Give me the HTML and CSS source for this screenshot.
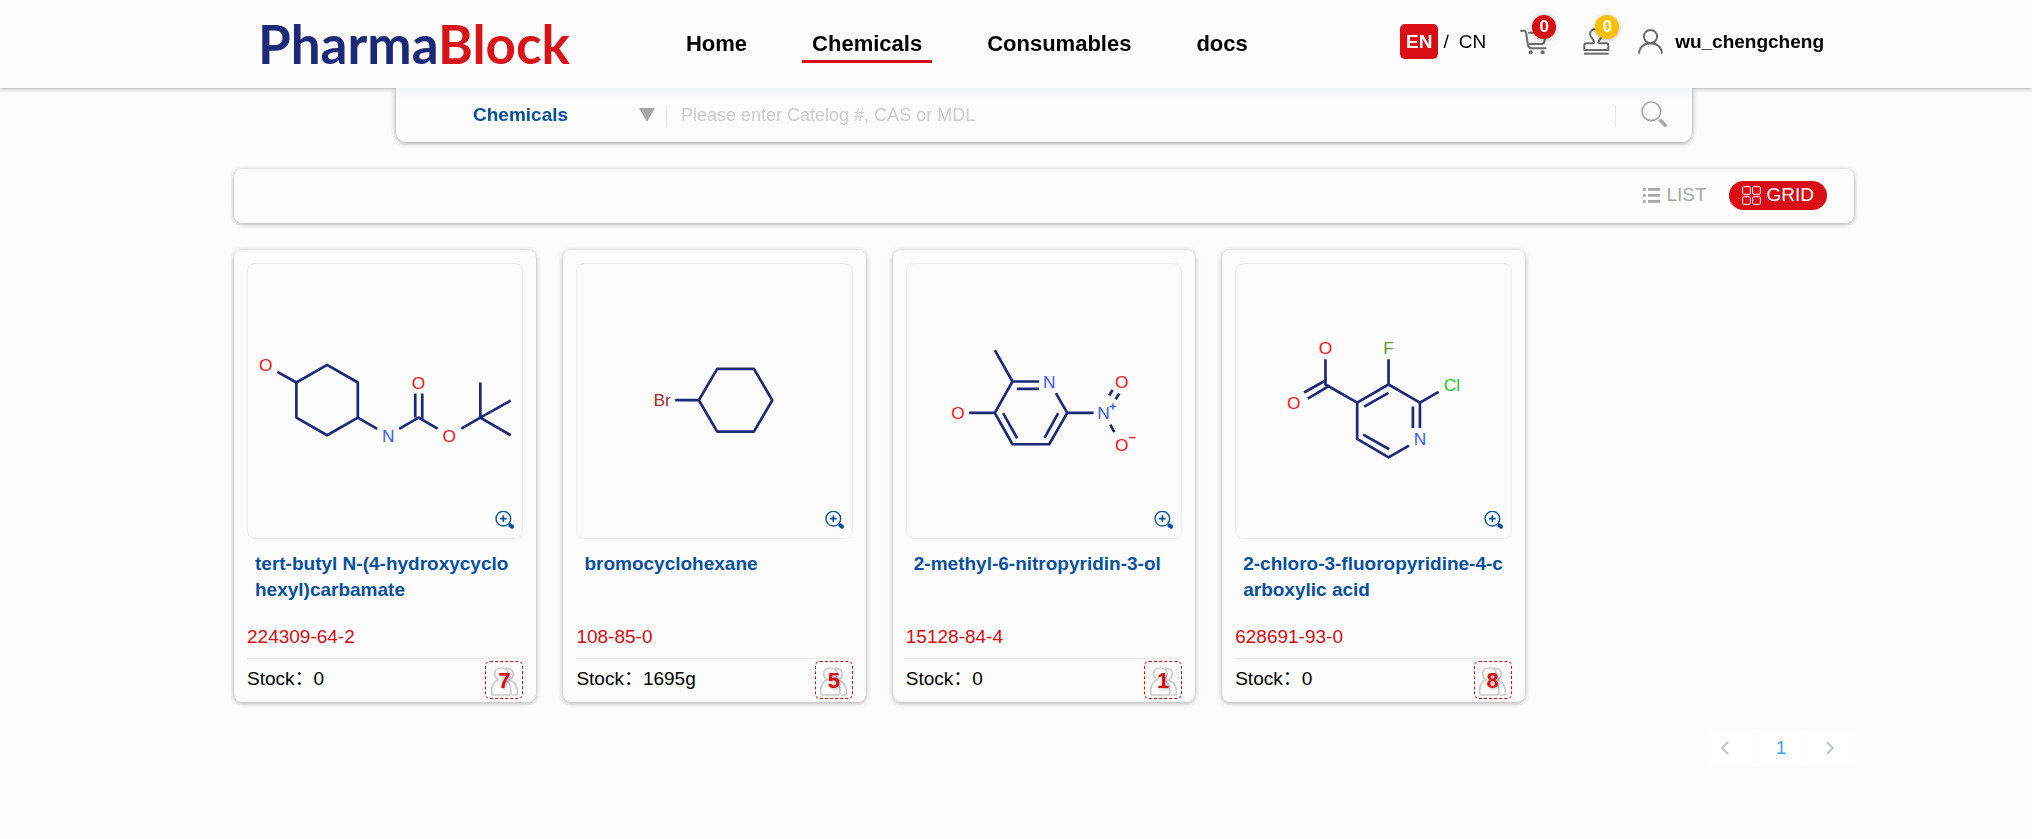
FILE: index.html
```html
<!DOCTYPE html>
<html lang="en">
<head>
<meta charset="utf-8">
<title>PharmaBlock</title>
<link rel="stylesheet" href="styles.css">
</head>
<body>
<svg class="sprite" aria-hidden="true">
  <symbol id="zoom-in" viewBox="0 0 57 54">
    <circle cx="25" cy="23" r="22" fill="none" stroke="currentColor" stroke-width="4"/>
    <path d="M25 13v20M15 23h20" stroke="currentColor" stroke-width="5"/>
    <path d="M46 43l5 4" stroke="currentColor" stroke-width="12" stroke-linecap="round"/>
  </symbol>
  <symbol id="people" viewBox="0 0 80 86">
    <g fill="none" stroke="#cacaca" stroke-width="5" stroke-linejoin="round" stroke-linecap="round">
      <path d="M22 38C15 34 11 28 11 20C11 9 20 3 31 3C42 3 51 10 51 20C51 28 47 34 40 38C52 42 58 53 59 68V77C59 82 57 83 53 83H8C4 83 2 81 2 77V68C3 53 10 42 22 38Z"/>
      <path d="M46 4C58 3 66 10 66 20C66 29 62 35 54 39C68 43 77 54 78 69V78C78 82 76 83 73 83H65"/>
    </g>
  </symbol>
</svg>

<header class="header">
  <div class="header-row">
    <a class="logo" href="#">Pharma<span class="logo-accent">Block</span></a>
    <nav class="nav">
      <a class="nav-link" href="#">Home</a>
      <a class="nav-link active" href="#">Chemicals</a>
      <a class="nav-link" href="#">Consumables</a>
      <a class="nav-link" href="#">docs</a>
    </nav>
    <div class="tools">
      <div class="lang">
        <button class="lang-btn current" type="button">EN</button>
        <span class="slash">/</span>
        <button class="lang-btn" type="button">CN</button>
      </div>
      <a class="tool" href="#" aria-label="Cart">
        <svg class="tool-icon" viewBox="0 0 81 81">
          <g fill="none" stroke="#6b6b6b" stroke-width="6" stroke-linecap="round" stroke-linejoin="round">
            <path d="M3 8H12Q17 8 18 13L24 52Q26 61 34 61H77"/>
            <path d="M27 14H78L73 41Q72 48 65 48H29"/>
          </g>
          <circle cx="32" cy="73" r="6" fill="#6b6b6b"/><circle cx="68" cy="73" r="6" fill="#6b6b6b"/>
        </svg>
        <span class="badge">0</span>
      </a>
      <a class="tool" href="#" aria-label="Orders">
        <svg class="tool-icon" viewBox="0 0 81 81">
          <g fill="none" stroke="#6b6b6b" stroke-width="6" stroke-linejoin="round">
            <path d="M34 46C34 33 21 30 21 18C21 9 29 3 40 3C51 3 59 9 59 18C59 30 46 33 46 46"/>
            <path d="M34 46H10Q4 46 4 53V66H76V53Q76 46 70 46H46"/>
            <path d="M3 77H77"/>
          </g>
        </svg>
        <span class="badge amber">0</span>
      </a>
      <a class="user" href="#">
        <svg class="user-icon" viewBox="0 0 76 76">
          <g fill="none" stroke="#6b6b6b" stroke-width="6">
            <circle cx="38" cy="23" r="20"/>
            <path d="M3 75C4 56 18 43 38 43C58 43 72 56 73 75"/>
          </g>
        </svg>
        <span>wu_chengcheng</span>
      </a>
    </div>
  </div>
</header>

<main class="main">
  <form class="search" role="search">
    <label class="picker">
      <select class="picker-select" aria-label="Category"><option>Chemicals</option></select>
      <svg class="picker-arrow" viewBox="0 0 16 14"><path d="M0 0H16L8 14Z" fill="#a6a6a6"/></svg>
    </label>
    <input class="search-input" type="text" aria-label="Search" placeholder="Please enter Catelog #, CAS or MDL">
    <button class="search-btn" type="button" aria-label="Search">
      <svg viewBox="0 0 81 81"><circle cx="31" cy="31" r="28" fill="none" stroke="#a6a6a6" stroke-width="5"/><path d="M56 56L76 76" stroke="#a6a6a6" stroke-width="10"/></svg>
    </button>
  </form>

  <div class="toolbar">
    <button class="view" type="button">
      <svg class="view-list" viewBox="0 0 51 45"><path d="M0 4H8M15 4H51M0 22H8M15 22H51M0 40H8M15 40H51" stroke="#a6a6a6" stroke-width="8"/></svg>
      <span>LIST</span>
    </button>
    <button class="view selected" type="button">
      <svg class="view-grid" viewBox="0 0 57 57"><g fill="none" stroke="#fff" stroke-width="3"><rect x="2" y="2" width="23" height="23" rx="3"/><rect x="32" y="2" width="23" height="23" rx="3"/><rect x="2" y="32" width="23" height="23" rx="3"/><rect x="32" y="32" width="23" height="23" rx="3"/></g></svg>
      <span>GRID</span>
    </button>
  </div>

  <section class="grid">
    <article class="card">
      <div class="figure">
        <svg class="molecule" viewBox="69 75 822 822">
          <path class="bond" d="M157 398L214 430L306 377L398 430V535L306 588L214 535V430M398 535L456 569M522 569L580 535L637 568M570 535V463M591 540V463M708 568L765 535V430M765 535L856 484M765 535L856 588"/>
          <g class="o"><text x="122" y="396">O</text><text x="580" y="449">O</text><text x="672" y="607">O</text></g>
          <text class="n" x="489" y="607">N</text>
        </svg>
        <button class="zoom" type="button" aria-label="Enlarge"><svg><use href="#zoom-in"/></svg></button>
      </div>
      <h2 class="title"><a href="#">tert-butyl N-(4-hydroxycyclohexyl)carbamate</a></h2>
      <p class="cas">224309-64-2</p>
      <div class="stock"><span>Stock：0</span><button class="count" type="button"><svg><use href="#people"/></svg><span class="count-num">7</span></button></div>
    </article>

    <article class="card">
      <div class="figure">
        <svg class="molecule" viewBox="69 75 822 822">
          <path class="bond" d="M363 483H434L489 389H599L654 483L599 577H489L434 483"/>
          <text class="br" x="324" y="501">Br</text>
        </svg>
        <button class="zoom" type="button" aria-label="Enlarge"><svg><use href="#zoom-in"/></svg></button>
      </div>
      <h2 class="title"><a href="#">bromocyclohexane</a></h2>
      <p class="cas">108-85-0</p>
      <div class="stock"><span>Stock：1695g</span><button class="count" type="button"><svg><use href="#people"/></svg><span class="count-num">5</span></button></div>
    </article>

    <article class="card">
      <div class="figure">
        <svg class="molecule" viewBox="67 75 822 822">
          <path class="bond" d="M330 333L383 427H463M396 449H462M383 427L330 521L383 615H493L547 521L513 462M253 521H330M355 522L397 597M520 522L479 596M547 521H626M676 556L688 579M673 469L683 452M692 480L703 463"/>
          <g class="o"><text x="220" y="540">O</text><text x="710" y="446">O</text><text x="710" y="634">O</text></g>
          <g class="n"><text x="493" y="446">N</text><text x="656" y="540">N</text></g>
          <path d="M674 502H693M684 492V512" stroke="#3b5bf5" stroke-width="4"/>
          <path d="M732 595H752" stroke="#ff1414" stroke-width="4"/>
        </svg>
        <button class="zoom" type="button" aria-label="Enlarge"><svg><use href="#zoom-in"/></svg></button>
      </div>
      <h2 class="title"><a href="#">2-methyl-6-nitropyridin-3-ol</a></h2>
      <p class="cas">15128-84-4</p>
      <div class="stock"><span>Stock：0</span><button class="count" type="button"><svg><use href="#people"/></svg><span class="count-num">1</span></button></div>
    </article>

    <article class="card">
      <div class="figure">
        <svg class="molecule" viewBox="64 75 822 822">
          <path class="bond" d="M332 360V436L427 490L521 436V360M521 436L615 490L671 458M615 490V566M594 502V566M427 490V599L521 654L582 619M448 502L521 461M445 586L523 630M332 424L268 460M342 441L279 478"/>
          <g class="o"><text x="332" y="345">O</text><text x="237" y="509">O</text></g>
          <text class="n" x="615" y="618">N</text>
          <text class="f" x="521" y="345">F</text>
          <text class="cl" x="711" y="455">Cl</text>
        </svg>
        <button class="zoom" type="button" aria-label="Enlarge"><svg><use href="#zoom-in"/></svg></button>
      </div>
      <h2 class="title"><a href="#">2-chloro-3-fluoropyridine-4-carboxylic acid</a></h2>
      <p class="cas">628691-93-0</p>
      <div class="stock"><span>Stock：0</span><button class="count" type="button"><svg><use href="#people"/></svg><span class="count-num">8</span></button></div>
    </article>
  </section>

  <nav class="pager" aria-label="Pages">
    <button class="page prev" type="button" aria-label="Previous page"><svg viewBox="0 0 9 14"><path d="M8 1L2 7L8 13" fill="none" stroke="#c0c4cc" stroke-width="2"/></svg></button>
    <button class="page num" type="button">1</button>
    <button class="page next" type="button" aria-label="Next page"><svg viewBox="0 0 9 14"><path d="M1 1L7 7L1 13" fill="none" stroke="#c0c4cc" stroke-width="2"/></svg></button>
  </nav>
</main>
</body>
</html>
```
FILE: styles.css
```css
* { box-sizing: border-box; }
body {
  margin: 0;
  padding-top: 88px;
  background: #fcfcfc;
  color: #000;
  font: 19px/26px "Liberation Sans", Arial, "Noto Sans CJK SC", sans-serif;
}
a { color: inherit; text-decoration: none; }
button, input, select {
  margin: 0;
  padding: 0;
  border: 0;
  background: none;
  color: inherit;
  font: inherit;
}
button { cursor: pointer; }
svg { display: block; }
.sprite { position: absolute; width: 0; height: 0; }

.main, .header-row { max-width: 1676px; margin: 0 auto; padding-left: 56px; }

.header {
  position: fixed;
  top: 0;
  left: 0;
  right: 0;
  background: #fcfcfc;
  box-shadow: 0 1px 4px rgba(0, 0, 0, 0.3);
}
.header-row {
  display: flex;
  align-items: center;
  height: 88px;
  padding-right: 30px;
  padding-left: 80px;
}
.logo {
  color: #1c2878;
  font: bold 53px/60px Lato, sans-serif;
}
.logo-accent { color: #d91418; }
.nav { display: flex; gap: 45px; margin-left: 106px; }
.nav-link {
  padding: 4px 10px 2px;
  border-bottom: 3px solid transparent;
  font-size: 22px;
  font-weight: bold;
  line-height: 28px;
}
.nav-link.active { border-color: #d90d13; }
.tools { display: flex; align-items: center; margin-left: auto; padding-bottom: 5px; }
.lang { display: flex; align-items: center; margin-right: 34px; }
.lang-btn.current {
  height: 35px;
  padding: 0 6px;
  border-radius: 5px;
  background: #d90d13;
  color: #fff;
  font-weight: bold;
}
.slash { margin: 0 10px 0 5px; }
.tool { position: relative; margin-right: 36px; }
.tool + .user { margin-left: -8px; }
.tool-icon { width: 27px; height: 27px; }
.badge {
  position: absolute;
  top: -13px;
  right: -9px;
  width: 24px;
  height: 24px;
  border-radius: 50%;
  background: #d90d13;
  box-shadow: 0 1px 4px rgba(0, 0, 0, 0.3);
  color: #fff;
  font-size: 17px;
  font-weight: bold;
  line-height: 24px;
  text-align: center;
}
.badge.amber { background: #ffc000; }
.user { display: flex; align-items: center; gap: 12px; font-weight: bold; }
.user-icon { width: 25px; height: 25px; }

.search {
  position: relative;
  display: flex;
  align-items: center;
  width: 80%;
  height: 54px;
  margin: 0 auto 27px;
  padding-left: 77px;
  border-radius: 0 0 10px 10px;
  background: linear-gradient(#f0f3f8, #fcfcfc 10px);
  box-shadow: 0 1px 5px rgba(0, 0, 0, 0.4);
  clip-path: inset(0 -10px -10px);
}
.picker {
  display: flex;
  align-items: center;
  width: 194px;
  height: 21px;
  border-right: 1px solid #e4e4e4;
  color: #0850a0;
}
.picker-select { flex: 1; appearance: none; font-weight: bold; outline: 0; }
.picker-arrow { width: 16px; height: 14px; margin-right: 11px; }
.search-input { flex: 1; padding-left: 14px; font-size: 18px; outline: 0; }
.search-input::placeholder { color: #ccc; opacity: 1; }
.search-btn { height: 21px; padding: 0 24px 0 25px; border-left: 1px solid #e4e4e4; }
.search-btn svg { width: 27px; height: 27px; margin-top: -4px; }

.toolbar {
  display: flex;
  align-items: center;
  justify-content: flex-end;
  gap: 22px;
  height: 54px;
  margin-bottom: 27px;
  padding: 0 27px 2px 0;
  border-radius: 8px;
  box-shadow: 0 1px 5px rgba(0, 0, 0, 0.35);
}
.view { display: flex; align-items: center; gap: 6px; color: #a6a6a6; }
.view.selected {
  height: 29px;
  padding: 0 13px;
  border-radius: 15px;
  background: #d90d13;
  color: #fff;
}
.view-list { width: 17px; height: 15px; }
.view-grid { width: 19px; height: 19px; }

.grid { display: grid; grid-template-columns: repeat(5, 1fr); gap: 27px; }
.card {
  padding: 13px 13px 3px;
  border-radius: 8px;
  box-shadow: 0 1px 5px rgba(0, 0, 0, 0.35);
}
.figure {
  position: relative;
  aspect-ratio: 1;
  border: 1px solid #ebebeb;
  border-radius: 8px;
}
.molecule { width: 100%; height: 100%; }
.bond { fill: none; stroke: #1c2878; stroke-width: 8; stroke-linejoin: round; }
.molecule text { font-size: 52px; text-anchor: middle; }
.o { fill: #ff1414; }
.n { fill: #3b5bf5; }
.br { fill: #a62929; }
.f { fill: #5a9c2e; }
.cl { fill: #1fc81f; }
.zoom { position: absolute; right: 8px; bottom: 9px; color: #0850a0; }
.zoom svg { width: 19px; height: 18px; }
.title {
  min-height: 52px;
  margin: 12px 0 21px;
  padding: 0 8px;
  color: #0850a0;
  font-size: 19px;
  line-height: 26px;
  word-break: break-all;
}
.cas { margin: 0; padding-bottom: 8px; border-bottom: 1px solid #ebebeb; color: #d90d13; }
.stock { display: flex; justify-content: space-between; padding-top: 2px; line-height: 36px; }
.count {
  position: relative;
  display: grid;
  place-items: center;
  width: 38px;
  height: 38px;
  border: 1px dashed #d90d13;
  border-radius: 5px;
}
.count svg { width: 27px; height: 29px; margin-top: 2px; }
.count-num {
  position: absolute;
  inset: 0;
  color: #d90d13;
  font-size: 22px;
  font-weight: bold;
  line-height: 38px;
  text-shadow: 1px 1px 3px rgba(0, 0, 0, 0.3);
}

.pager { display: flex; justify-content: flex-end; gap: 1px; margin-top: 27px; }
.page { display: flex; align-items: center; width: 48px; height: 38px; background: #fff; }
.page svg { width: 9px; height: 14px; }
.prev { padding-left: 12px; }
.num { justify-content: center; color: #409eff; }
.next { padding-left: 20px; }
```
